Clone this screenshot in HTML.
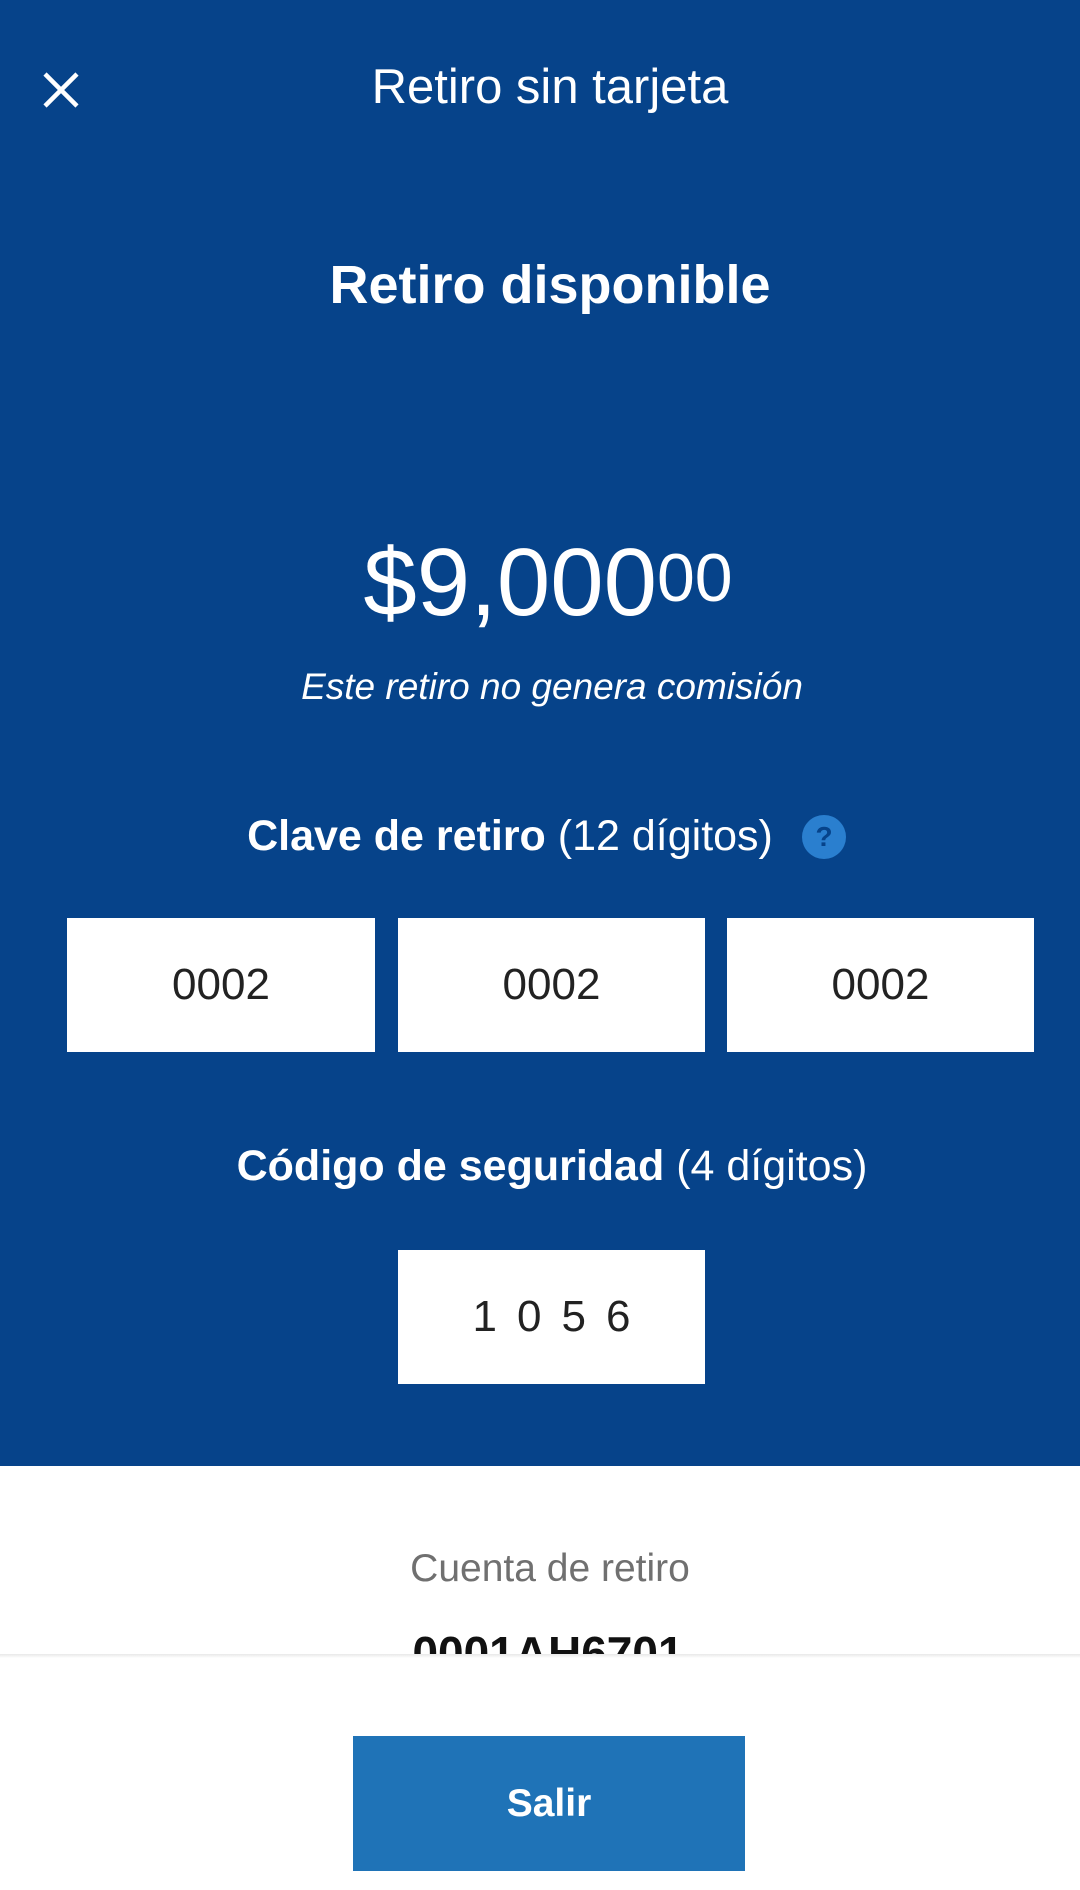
<!DOCTYPE html>
<html><head><meta charset="utf-8"><style>
html,body{margin:0;padding:0;width:1080px;height:1890px;overflow:hidden;background:#fff;font-family:"Liberation Sans",sans-serif}
.blue{position:absolute;left:0;top:0;width:1080px;height:1466px;background:#06438a}
.t{position:absolute;left:0;width:1080px;text-align:center;color:#fff;white-space:nowrap}
.box{position:absolute;background:#fff;height:134px;display:flex;align-items:center;justify-content:center;font-size:44px;color:#222}
</style></head><body>
<div class="blue"></div>
<svg style="position:absolute;left:42px;top:72px" width="38" height="36" viewBox="0 0 38 36"><path d="M3 2L35 34M35 2L3 34" stroke="#fff" stroke-width="4.5"/></svg>
<div class="t" style="top:59px;font-size:49px;left:10px">Retiro sin tarjeta</div>
<div class="t" style="top:254px;font-size:54px;font-weight:bold;left:10px">Retiro disponible</div>
<div class="t" style="top:528px;font-size:96px;left:8px">$9,000<span style="font-size:68px;vertical-align:14px">00</span></div>
<div class="t" style="top:666px;font-size:37px;font-style:italic;left:12px">Este retiro no genera comisión</div>
<div class="t" style="top:812px;font-size:43px;left:-30px"><b>Clave de retiro</b> (12 dígitos)</div>
<div style="position:absolute;left:802px;top:815px;width:44px;height:44px;border-radius:50%;background:#2a7fcf;color:#06438a;font-size:28px;font-weight:bold;text-align:center;line-height:44px">?</div>
<div class="box" style="left:67px;top:918px;width:308px">0002</div>
<div class="box" style="left:398px;top:918px;width:307px">0002</div>
<div class="box" style="left:727px;top:918px;width:307px">0002</div>
<div class="t" style="top:1142px;font-size:43px;left:12px"><b>Código de seguridad</b> (4 dígitos)</div>
<div class="box" style="left:398px;top:1250px;width:307px;letter-spacing:20px;padding-left:20px;box-sizing:border-box">1056</div>
<div class="t" style="top:1547px;font-size:39px;color:#707070;left:10px">Cuenta de retiro</div>
<div style="position:absolute;left:0;top:1620px;width:1080px;height:34px;overflow:hidden"><div class="t" style="top:6px;font-size:46px;color:#111;left:8px;font-weight:bold">0001AH6701</div></div>
<div style="position:absolute;left:0;top:1654px;width:1080px;height:4px;background:linear-gradient(#e8e8e8,#fff)"></div>
<div style="position:absolute;left:353px;top:1736px;width:392px;height:135px;background:#1f73b7;color:#fff;font-weight:bold;font-size:39px;display:flex;align-items:center;justify-content:center">Salir</div>
</body></html>
